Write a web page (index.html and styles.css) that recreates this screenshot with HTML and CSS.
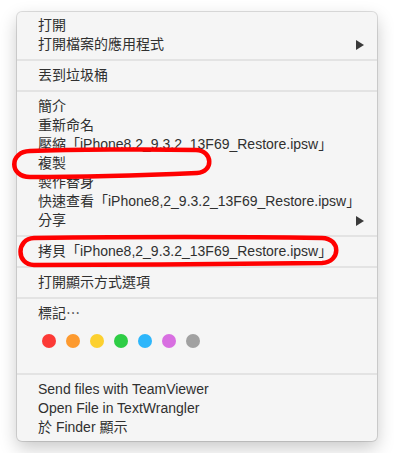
FILE: index.html
```html
<!DOCTYPE html>
<html lang="zh-Hant">
<head>
    <meta charset="UTF-8">
    <meta name="viewport" content="width=device-width, initial-scale=1.0">
    <title>Context Menu</title>
    <link rel="stylesheet" href="styles.css">
</head>
<body>
    <div class="menu">
        <div class="item">打開</div>
        <div class="item">打開檔案的應用程式 <span class="arrow"></span></div>
        <div class="sep"></div>
        <div class="item">丟到垃圾桶</div>
        <div class="sep"></div>
        <div class="item">簡介</div>
        <div class="item">重新命名</div>
        <div class="item">壓縮「iPhone8,2_9.3.2_13F69_Restore.ipsw」</div>
        <div class="item">複製</div>
        <div class="item">製作替身</div>
        <div class="item">快速查看「iPhone8,2_9.3.2_13F69_Restore.ipsw」</div>
        <div class="item">分享 <span class="arrow"></span></div>
        <div class="sep"></div>
        <div class="item">拷貝「iPhone8,2_9.3.2_13F69_Restore.ipsw」</div>
        <div class="sep"></div>
        <div class="item">打開顯示方式選項</div>
        <div class="sep"></div>
        <div class="item">標記⋯</div>
        <div class="tags">
            <span class="tag red"></span>
            <span class="tag orange"></span>
            <span class="tag yellow"></span>
            <span class="tag green"></span>
            <span class="tag blue"></span>
            <span class="tag purple"></span>
            <span class="tag gray"></span>
        </div>
        <div class="sep"></div>
        <div class="item">Send files with TeamViewer</div>
        <div class="item">Open File in TextWrangler</div>
        <div class="item">於 Finder 顯示</div>
    </div>

    <!-- red marks drawn over the menu -->
    <svg class="marks" width="394" height="462" viewBox="0 0 394 462">
        <path d="M30 151 C70 149.5 150 149 196 150 C213 150.5 214 172 197 173 C150 175 70 177 30 177 C9 177 9 151.5 30 151 Z" />
        <path d="M34 238 C120 237 250 237 322 238 C341 238.5 341 262 322 263 C250 264 120 265 34 265 C16 265 16 238.5 34 238 Z" />
    </svg>
</body>
</html>
```

FILE: styles.css
```css
body {
    margin: 0;
    padding: 12px 17px;
    background-color: #ffffff;
    font-family: "Liberation Sans", "Noto Sans CJK TC", sans-serif;
    font-size: 14px;
    color: #303030;
}
.menu {
    width: 360px;
    padding: 4px 0;
    background-color: #f5f5f5;
    border-radius: 5px;
    box-shadow: 0 0 0 1px rgba(0,0,0,0.12), 0 7px 18px rgba(0,0,0,0.22);
}
.item {
    height: 19px;
    line-height: 19px;
    padding: 0 13px 0 21px;
    display: flex;
    justify-content: space-between;
    align-items: center;
    white-space: nowrap;
}
.arrow {
    width: 0;
    height: 0;
    border-top: 5px solid transparent;
    border-bottom: 5px solid transparent;
    border-left: 8px solid #3a3a3a;
}
.sep {
    height: 2px;
    margin: 5px 0;
    background-color: #e3e3e3;
}
.tags {
    display: flex;
    gap: 10px;
    padding: 11px 0 20px 25px;
}
.tag {
    width: 14px;
    height: 14px;
    border-radius: 50%;
}
.red { background-color: #fc3a36; }
.orange { background-color: #fd9a2f; }
.yellow { background-color: #fcd02f; }
.green { background-color: #2ecd45; }
.blue { background-color: #2db6fb; }
.purple { background-color: #d86fe1; }
.gray { background-color: #a1a1a1; }
.marks {
    position: absolute;
    left: 0;
    top: 0;
    fill: none;
    stroke: #ff0000;
    stroke-width: 4.5;
}
```
